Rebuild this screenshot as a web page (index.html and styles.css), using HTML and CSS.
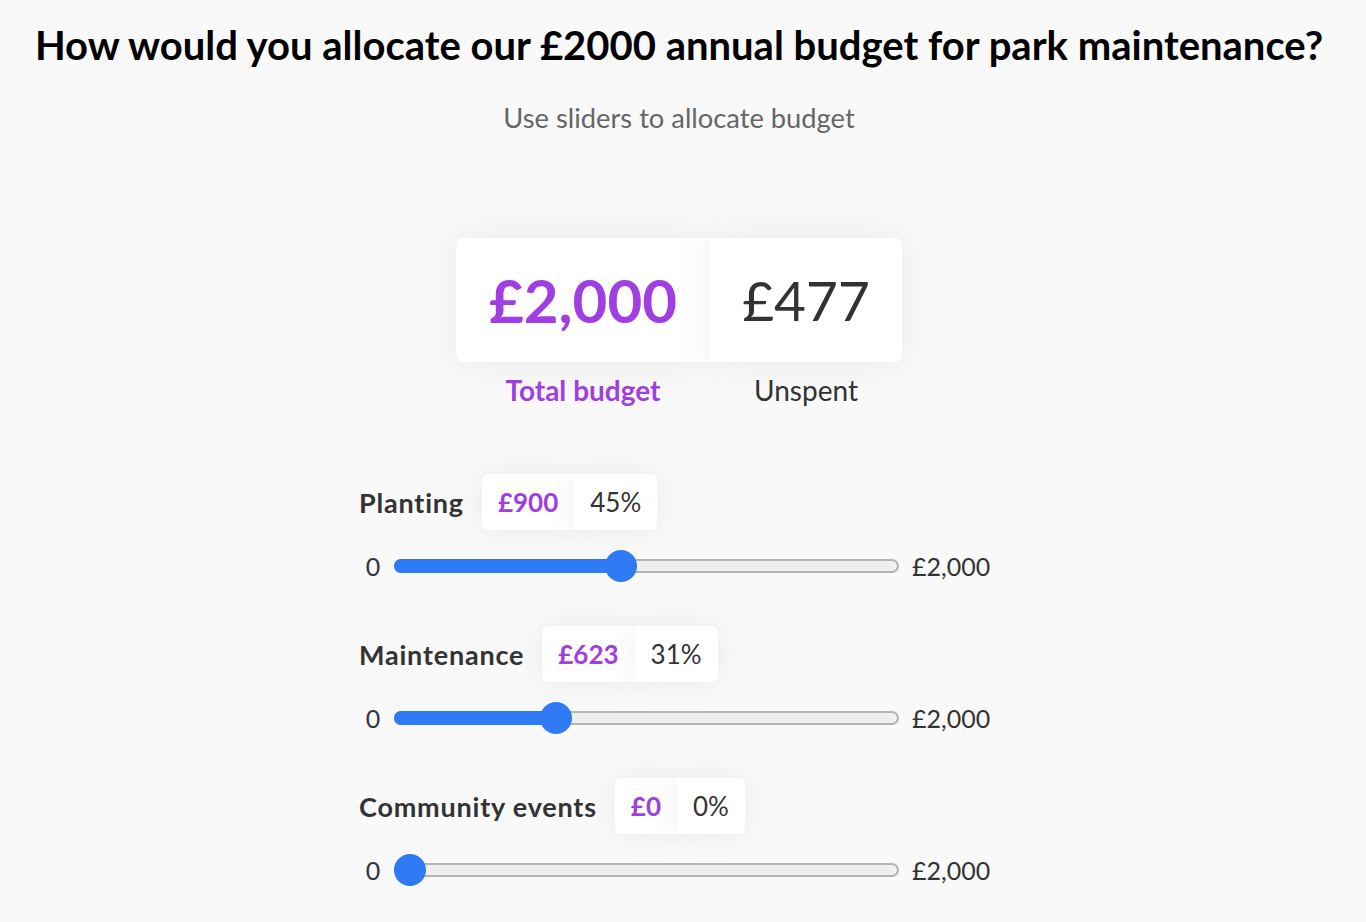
FILE: index.html
```html
<!DOCTYPE html>
<html lang="en">
<head>
<meta charset="utf-8">
<title>Budget allocation</title>
<link rel="stylesheet" href="styles.css">
</head>
<body>
<main class="page">
  <h1 class="title">How would you allocate our £2000 annual budget for park maintenance?</h1>
  <p class="subtitle">Use sliders to allocate budget</p>

  <section class="summary">
    <div class="summary-card">
      <div class="summary-cell total">£2,000</div>
      <div class="summary-cell unspent">£477</div>
    </div>
    <div class="summary-labels">
      <div class="summary-label total-label">Total budget</div>
      <div class="summary-label unspent-label">Unspent</div>
    </div>
  </section>

  <section class="sliders">
    <div class="item">
      <div class="item-head">
        <span class="item-name">Planting</span>
        <div class="pill"><span class="pill-amount">£900</span><span class="pill-pct">45%</span></div>
      </div>
      <div class="slider-row">
        <span class="range-min">0</span>
        <div class="track">
          <div class="fill" style="width: calc(16px + 0.45 * (100% - 32px))"></div>
          <div class="thumb" style="left: calc(0.45 * (100% - 32px))"></div>
        </div>
        <span class="range-max">£2,000</span>
      </div>
    </div>

    <div class="item">
      <div class="item-head">
        <span class="item-name">Maintenance</span>
        <div class="pill"><span class="pill-amount">£623</span><span class="pill-pct">31%</span></div>
      </div>
      <div class="slider-row">
        <span class="range-min">0</span>
        <div class="track">
          <div class="fill" style="width: calc(16px + 0.3115 * (100% - 32px))"></div>
          <div class="thumb" style="left: calc(0.3115 * (100% - 32px))"></div>
        </div>
        <span class="range-max">£2,000</span>
      </div>
    </div>

    <div class="item">
      <div class="item-head">
        <span class="item-name">Community events</span>
        <div class="pill"><span class="pill-amount">£0</span><span class="pill-pct">0%</span></div>
      </div>
      <div class="slider-row">
        <span class="range-min">0</span>
        <div class="track">
          <div class="fill" style="width: 0"></div>
          <div class="thumb" style="left: 0"></div>
        </div>
        <span class="range-max">£2,000</span>
      </div>
    </div>
  </section>
</main>
</body>
</html>
```

FILE: styles.css
```css
* { box-sizing: border-box; }

html, body {
  margin: 0;
  padding: 0;
  background: #f9f9f9;
}

body {
  font-family: "Lato", "Liberation Sans", sans-serif;
  color: #333;
}

.page {
  width: 1358px;
  padding-top: 23px;
  display: flex;
  flex-direction: column;
  align-items: center;
}

.title {
  margin: 0;
  font-size: 40px;
  line-height: 44px;
  font-weight: 700;
  color: #000;
  text-align: center;
  white-space: nowrap;
}

.subtitle {
  margin: 33px 0 0;
  font-size: 27.3px;
  line-height: 36px;
  color: #666;
  text-align: center;
}

.summary {
  margin-top: 102px;
  display: flex;
  flex-direction: column;
}

.summary-card {
  display: flex;
  height: 124px;
  border-radius: 8px;
}

.summary-cell {
  display: flex;
  align-items: center;
  justify-content: center;
  background: #fff;
  box-shadow: 0 0 40px rgba(0, 0, 0, 0.07);
}

.summary-cell.total {
  width: 254px;
  font-size: 60px;
  color: #a03ee2;
  font-weight: 700;
  border-radius: 8px 0 0 8px;
}

.summary-cell.unspent {
  width: 192px;
  font-size: 55px;
  color: #333;
  border-radius: 0 8px 8px 0;
}

.summary-labels {
  display: flex;
  margin-top: 12px;
}

.summary-label {
  font-size: 28px;
  line-height: 32px;
  text-align: center;
}

.total-label {
  width: 254px;
  color: #a03ee2;
  font-weight: 700;
}

.unspent-label {
  width: 192px;
  color: #333;
}

.sliders {
  width: 640px;
  margin-top: 68px;
  display: flex;
  flex-direction: column;
}

.item {
  padding-bottom: 44px;
}

.item-head {
  display: flex;
  align-items: center;
  gap: 18px;
  height: 56px;
}

.item-name {
  font-size: 27px;
  letter-spacing: 0.8px;
  font-weight: 700;
  color: #333;
}

.pill {
  display: flex;
  height: 56px;
  border-radius: 6px;
}

.pill span {
  display: flex;
  align-items: center;
  padding: 0 16px;
  background: #fff;
  font-size: 26px;
  box-shadow: 0 0 30px rgba(0, 0, 0, 0.07);
}

.pill-amount {
  color: #a03ee2;
  font-weight: 700;
  border-radius: 6px 0 0 6px;
}

.pill-pct {
  color: #333;
  border-radius: 0 6px 6px 0;
}

.slider-row {
  display: flex;
  align-items: center;
  height: 32px;
  margin-top: 20px;
}

.range-min {
  width: 28px;
  text-align: center;
  font-size: 25px;
  color: #333;
}

.track {
  position: relative;
  width: 505px;
  height: 14px;
  margin: 0 13px 0 7px;
  border: 2px solid #b4b4b4;
  border-radius: 7px;
  background: #efefef;
}

.fill {
  position: absolute;
  left: -2px;
  top: -2px;
  bottom: -2px;
  background: #2f7af5;
  border-radius: 7px 0 0 7px;
}

.thumb {
  position: absolute;
  top: 50%;
  margin-left: -2px;
  width: 32px;
  height: 32px;
  margin-top: -16px;
  border-radius: 50%;
  background: #2f7af5;
}

.range-max {
  font-size: 25px;
  color: #333;
}
```
